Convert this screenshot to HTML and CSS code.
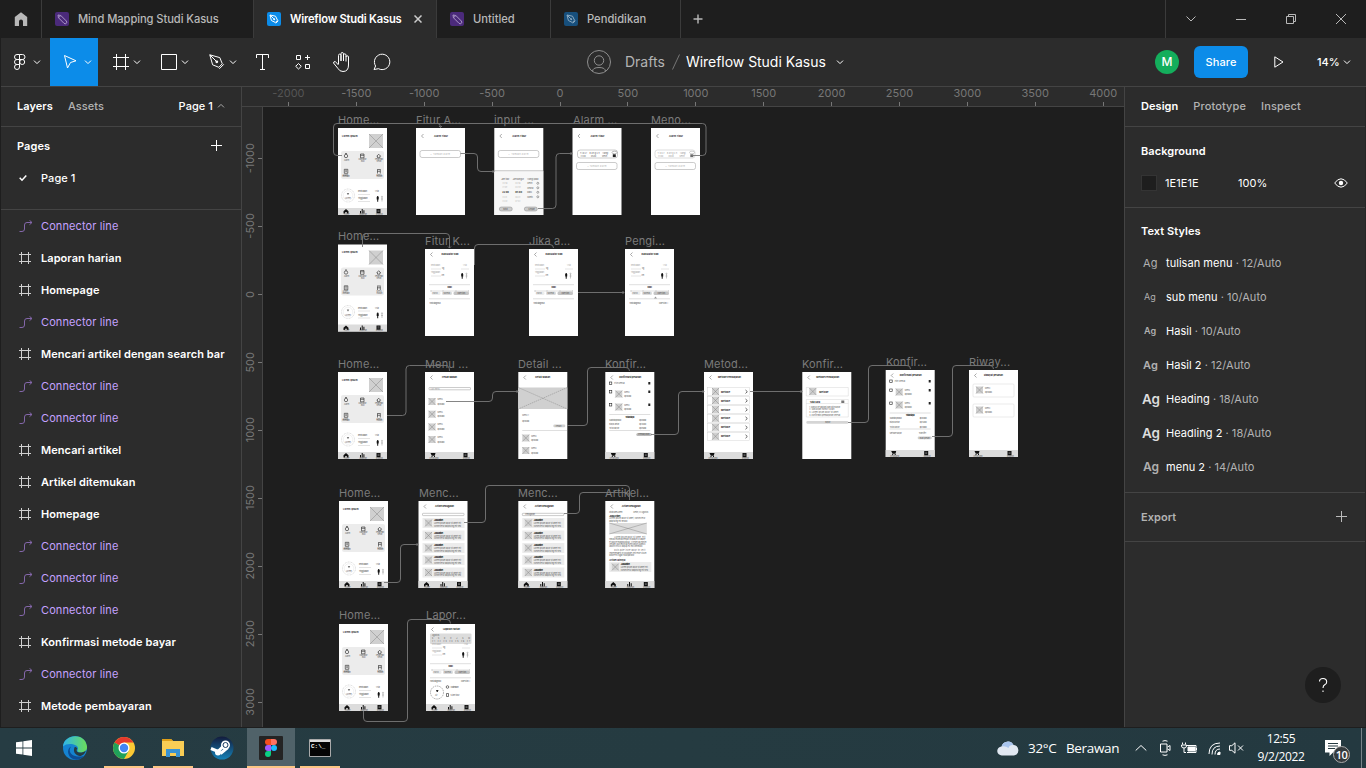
FILE: index.html
```html
<!DOCTYPE html>
<html lang="en">
<head>
<meta charset="utf-8">
<title>Wireflow Studi Kasus</title>
<link rel="stylesheet" href="styles.css">
</head>
<body>
<svg class="defs" width="0" height="0" aria-hidden="true">
  <defs>
    <symbol id="chev" viewBox="0 0 8 8"><path d="M1 2.6 4 5.6 7 2.6" fill="none" stroke="currentColor"/></symbol>
    <symbol id="frame" viewBox="0 0 12 12"><path d="M2.5 0v12M9.5 0v12M0 2.5h12M0 9.5h12" fill="none" stroke="currentColor"/></symbol>
    <symbol id="conn" viewBox="0 0 14 12"><path d="M.5 11.500h2.500q2.500 0 2.500-2.500v-4q0-2.500 2.500-2.500H13M10.500.3 13 2.500 10.500 4.700" fill="none" stroke="currentColor"/></symbol>
    <symbol id="pencil" viewBox="0 0 14 14"><path d="M3 3 5.800 3.500 11.300 9a1.600 1.600 0 0 1-2.300 2.300L3.500 5.800zM3.500 5.800 5.800 3.500" fill="none" stroke="currentColor" stroke-linejoin="round"/></symbol>
    <symbol id="nib" viewBox="0 0 14 14"><path d="M3 3 8.500 4.200 10.500 8.200 8.400 10.500 4.400 8.500zM3 3 6.800 6.800M11.300 8.700 8.800 11.300" fill="none" stroke="currentColor"/><circle cx="7.200" cy="7.200" r="1" fill="currentColor"/></symbol>
    <symbol id="pen" viewBox="0 0 16 16"><path d="M.8.8 10.800 3.600 13.300 9.800 9.800 13.300 3.600 10.800zM.8.8 7 7M14.800 10.300 10.300 14.800" fill="none" stroke="currentColor"/><circle cx="7.800" cy="7.800" r="1.400" fill="currentColor"/></symbol>

    <g id="back"><path d="M7.500 3.500 5.500 5.500 7.500 7.500" fill="none" stroke="#555" stroke-width=".5"/></g>
    <g id="ximg"><path class="g3" d="M0 0h7v7H0z"/><path class="thin" d="M0 0 7 7M7 0 0 7"/></g>
    <g id="people"><path d="M38.700 24h2v2.500h-.5v2.300h-1v-2.300h-.5z" fill="#111"/><circle cx="39.700" cy="23.700" r=".8" fill="#111"/><path class="thin" d="M44 24.500v4M43 26h2"/><circle class="thin" cx="44" cy="23.800" r=".6"/></g>
    <g id="navHome"><path fill="#111" d="m5.500 83.300 2.500-2.300 2.500 2.300V85.500h-1.500v-1.200h-2v1.200h-1.500z"/><text x="6" y="86.800">Home</text></g>
    <g id="navBook"><path fill="#111" d="M38.500 81h4v4.300h-4z"/><path d="M39.500 82.300h2M39.500 83.500h2" stroke="#bbb" stroke-width=".4"/><text x="38" y="86.800">Riwayat</text></g>
    <g id="nav3"><path class="g2" d="M0 80h49v7H0z"/><use href="#navHome"/><path fill="#111" d="M22 83h1v2.500h-1zM23.700 81h1v4.500h-1zM25.400 82.300h1v3.200h-1z"/><text x="21.500" y="86.800">Laporan</text><use href="#navBook"/></g>
    <g id="nav2"><path class="g2" d="M0 80h49v7H0z"/><path fill="#111" d="M5.500 81h5l-.7 2.700h-3zM6.500 84h1v1h-1zM9 84h1v1H9z"/><text x="4.500" y="86.600">Keranjang</text><use href="#navBook"/></g>

    <g id="home">
      <path class="w" d="M0 0h49v87H0z"/>
      <text class="b" x="4" y="8.700" textLength="15.500">Lorem Ipsum</text>
      <path class="g3" d="M31 6h14v14H31z"/><path class="thin" d="m31 6 14 14M45 6 31 20"/>
      <rect class="g1" x="3" y="23" width="43" height="28" rx="2"/>
      <g class="ico"><circle cx="8" cy="28" r="1.700"/><path d="M7 25.500h2"/><path d="M22.500 26h3.500v3.800h-3.500zM22.500 27.300H26M38.800 28.200l1.900-2 1.900 2h-.7v1.500h-2.400v-1.500zM6.300 41.300h3.500v4H6.300zM7.300 42.300h1.500M7.300 43.600h1.500M39 41.500h3.800M39.500 42v3.500M42.300 42v3.500M39.500 43.300h2.800"/></g>
      <text x="6" y="32.800">Alarm</text><text x="20.500" y="32.300" textLength="8">Kalkulator</text><text x="23" y="34.300">BMI</text><text x="37" y="32.300" textLength="8">Pesan mak</text><text x="38.500" y="34.300">sehat</text>
      <text x="4.500" y="47.500">Artikel</text><text x="4.500" y="49.400" textLength="7">kesehatan</text><text x="38.500" y="47.500">Menu</text><text x="38.500" y="49.400">makan</text>
      <circle cx="10" cy="67.500" r="6.500" fill="none" stroke="#bbb" stroke-width=".5" stroke-dasharray="1 .6"/><circle cx="10" cy="67.500" r="4.800" fill="none" stroke="#ddd" stroke-width=".4"/>
      <path d="M8.800 65h2.400l-.8 1.800h-.8z" fill="#777"/><text x="7" y="71">Lorem</text>
      <text x="20" y="64" textLength="9">Berat badan</text><path class="thin" stroke-opacity=".5" d="M20 66.500h12M20 73.500h12"/><text x="20" y="71" textLength="9.500">Tinggi badan</text><text x="37" y="64">Usia</text>
      <use href="#people" y="45"/>
      <use href="#nav3"/>
    </g>

    <g id="add"><rect class="field" x="4" y="22.500" width="40.500" height="7" rx="2"/><text x="14" y="27" textLength="20" fill="#aaa">＋ Tambah alarm</text></g>
    <g id="alarmHead"><path class="w" d="M0 0h49v87H0z"/><use href="#back" y="2.500"/><text class="b" x="18" y="9" textLength="14">Alarm Tidur</text></g>
    <g id="entry"><rect class="field" x="5" y="22" width="40" height="8" rx="2.500"/><text x="7.500" y="25.500" textLength="7">Tidur</text><text x="17" y="25.500" textLength="10">Bangun</text><text x="30" y="25.500">Ulangi</text><text x="8" y="28.600">22.00</text><text x="18.500" y="28.600">05.00</text><text x="29.500" y="28.600">Senin</text><ellipse cx="42" cy="24.500" rx="2.500" ry="1.300" fill="none" stroke="#777" stroke-width=".5"/><path fill="#222" d="M40.300 26.300h3v2.800h-3z"/></g>
    <g id="alarmSet"><path d="M0 43h49v44H0z" fill="#f7f7f7"/><path class="thin" d="M0 42.700h49"/><text x="7" y="51.500" textLength="8">Jam tidur</text><text x="18.500" y="51.500" textLength="11">Jam bangun</text><text x="33" y="51.500" textLength="11">Ulangi pada</text>
      <g fill="#bbb"><text x="8" y="56">20 58</text><text x="21" y="56">03 58</text><text x="8" y="60">21 59</text><text x="21" y="60">04 59</text><text x="8" y="69.500">23 01</text><text x="21" y="69.500">06 01</text><text x="8" y="73.500">24 02</text><text x="21" y="73.500">07 02</text></g>
      <text class="b" x="8" y="65">22 00</text><text class="b" x="21" y="65">05 00</text>
      <text x="33" y="56">Senin</text><text x="33" y="60.500">Selasa</text><text x="33" y="65">Rabu</text><text x="33" y="69.500">Kamis</text>
      <g class="ico" stroke-opacity=".6"><circle cx="43.500" cy="55.300" r="1"/><circle cx="43.500" cy="59.800" r="1"/><circle cx="43.500" cy="64.300" r="1"/><circle cx="43.500" cy="68.800" r="1"/></g>
      <rect x="5" y="79" width="13" height="4" rx="2" fill="#ccc" stroke="#777" stroke-width=".4"/><text x="9" y="82">Batal</text><rect x="30" y="79" width="13" height="4" rx="2" fill="#ccc" stroke="#777" stroke-width=".4"/><text x="34" y="82">Simpan</text></g>

    <g id="bmiBody">
      <text x="6" y="17" fill="#aaa" textLength="9">Berat badan</text><text x="17" y="20">kg</text><text x="38" y="17" fill="#aaa">Usia</text><path class="thin" stroke-opacity=".5" d="M6 20h10M6 27h10M36 20h8"/><text x="6" y="24" fill="#aaa" textLength="9">Tinggi badan</text><text x="16.500" y="27">cm</text>
      <g transform="translate(-2.500 1)"><use href="#people"/></g><path class="thin" stroke-opacity=".6" d="M4 35.700h41M4 49.800h41"/><text class="b" x="22.500" y="38.700">BMI</text>
      <path class="thin" stroke-opacity=".6" d="M5.500 42h38M6 41v2M18 41v2M31 41v2M43.500 41v2"/><rect x="6.500" y="42.500" width="9" height="3.500" rx="1.500" class="g1"/><rect x="17" y="42.500" width="10" height="3.500" rx="1.500" class="g2"/><rect x="28.500" y="42.500" width="15.500" height="3.500" rx="1.500" fill="#c5c5c5"/>
      <text x="7.500" y="45.300">Kurus</text><text x="18.500" y="45.300">Normal</text><text x="32.500" y="45.300">Obesitas</text>
    </g>
    <g id="bmi"><path class="w" d="M0 0h49v87H0z"/><use href="#back"/><text class="b" x="16.500" y="6.200" textLength="17">Kalkulator BMI</text><use href="#bmiBody"/><text x="4.500" y="55.200" textLength="11">Hasil diagnosa</text></g>

    <g id="product"><use href="#ximg"/><text x="9" y="2">Menu</text><text x="9" y="6.500" textLength="7">Rp 10.000</text></g>
    <g id="check"><rect class="ico" x="4" y="0" width="2.500" height="2.500"/><path fill="#222" d="M43 0h2v2.500h-2z"/></g>
    <g id="pay"><rect class="card" x="3.500" width="42" height="8"/><use href="#ximg" x="8" y=".5"/><text class="b" x="17" y="5" textLength="9">Metode</text><path d="m41.500 2.500 1.800 1.700-1.800 1.700" fill="none" stroke="#222" stroke-width=".7"/></g>
    <g id="article"><path class="g1" d="M4 0h42v10H4z"/><use href="#ximg" x="6.500" y="1.500"/><text class="b" x="15.500" y="3.200" textLength="9">Judul artikel</text><text x="15.500" y="6" textLength="27">Lorem ipsum dolor sit amet elit</text><text x="15.500" y="8.500" textLength="27">consectetur adipiscing elit sed</text></g>
    <g id="articles"><path class="w" d="M0 0h49v87H0z"/><use href="#back"/><text class="b" x="16.500" y="6.200" textLength="19">Artikel kebugaran</text><rect class="field" x="4" y="12.300" width="41.500" height="2.300" rx=".6"/><use href="#article" y="17"/><use href="#article" y="29.500"/><use href="#article" y="42"/><use href="#article" y="54"/><use href="#article" y="66.500"/><use href="#nav3"/></g>
  </defs>
</svg>

<div class="app">
  <header class="tabs">
    <div class="home-tab"><svg width="14" height="14" viewBox="0 0 14 14"><path fill="#b8b8b8" d="M7 .2 13.200 5v9H9V9.500a2 2 0 0 0-4 0V14H.8V5z"/></svg></div>
    <div class="tab t1"><svg class="fi purple" width="14" height="14"><use href="#pencil"/></svg><span>Mind Mapping Studi Kasus</span></div>
    <div class="tab t2 active"><svg class="fi blue" width="14" height="14"><use href="#nib"/></svg><span>Wireflow Studi Kasus</span><svg class="close" width="8" height="8"><path d="m.5.5 7 7m0-7-7 7" stroke="#ccc" stroke-width="1.500"/></svg></div>
    <div class="tab t3"><svg class="fi purple" width="14" height="14"><use href="#pencil"/></svg><span>Untitled</span></div>
    <div class="tab t4"><svg class="fi navy" width="14" height="14"><use href="#nib"/></svg><span>Pendidikan</span></div>
    <svg class="newtab" width="10" height="10"><path d="M5 .5v9M.5 5h9" stroke="#b8b8b8" stroke-width="1.400"/></svg>
    <div class="win">
      <span><svg width="12" height="12"><path d="m1.500 3.500 4.500 4.500 4.500-4.500"/></svg></span>
      <span><svg width="12" height="12"><path d="M1 6.500h10"/></svg></span>
      <span><svg width="12" height="12"><path d="M1.500 3.500h7v7h-7zM3.500 3.500v-2h7v7h-2"/></svg></span>
      <span><svg width="12" height="12"><path d="m1 1 10 10M11 1 1 11"/></svg></span>
    </div>
  </header>

  <div class="toolbar">
    <div class="tool menu"><svg width="12" height="16" viewBox="0 0 12 16"><path d="M5.500.5H3a2.400 2.400 0 0 0 0 5h2.500zM5.500.5h3a2.400 2.400 0 0 1 0 5h-3M5.500 5.500H3a2.400 2.400 0 0 0 0 5h2.500zM5.500 10.500H3a2.500 2.500 0 1 0 2.500 2.500z"/><circle cx="8.200" cy="8" r="2.500"/></svg><svg class="chev" width="8" height="8"><use href="#chev"/></svg></div>
    <div class="tool move"><svg width="14" height="16" viewBox="0 0 14 16"><path d="M1.500 1.500 13 6.800 7.500 8.500 4.500 14z"/></svg><svg class="chev" width="8" height="8"><use href="#chev"/></svg></div>
    <div class="tool drop"><svg width="16" height="16" viewBox="0 0 16 16"><path d="M3.500 0v16M12.500 0v16M0 3.500h16M0 12.500h16"/></svg><svg class="chev" width="8" height="8"><use href="#chev"/></svg></div>
    <div class="tool drop"><svg width="16" height="16"><path d="M.5.5h15v15H.5z"/></svg><svg class="chev" width="8" height="8"><use href="#chev"/></svg></div>
    <div class="tool drop"><svg width="16" height="16"><use href="#pen"/></svg><svg class="chev" width="8" height="8"><use href="#chev"/></svg></div>
    <div class="tool one"><svg width="14" height="16"><path d="M1.500 4V.5h12V4M7.500.5v15M5 15.500h5"/></svg></div>
    <div class="tool one"><svg width="16" height="16"><path d="M2.500 1.500h4v4h-4zM13.500 1v5M11 3.500h5M11.500 10.500h4v4h-4zM4.500 9.500 7.300 12.300 4.500 15 1.700 12.300z"/></svg></div>
    <div class="tool one"><svg width="20" height="20" viewBox="0 0 20 20"><path d="M6.500 12V3.500q0-1.400 1.200-1.400T9 3.500V9M9 9V1.800Q9 .5 10.200.5t1.300 1.300V9m0-6q0-1.200 1.200-1.200T14 3v6.500m0-4.500q0-1.200 1.200-1.200T16.500 5v8q0 6.500-5.500 6.500-3.500 0-5-3L1.500 11q0-1.500 1.800-1.500L6.500 13"/></svg></div>
    <div class="tool one"><svg width="18" height="18"><path d="M1 16.500 2.600 13A7.700 7.700 0 1 1 5.500 15.700z"/></svg></div>
    <div class="crumb">
      <svg width="24" height="24"><g fill="none" stroke="#8f8f8f"><circle cx="12" cy="12" r="11.500"/><circle cx="12" cy="10.500" r="4.700"/><path d="M5.500 21.500q0-4 6.500-4t6.500 4"/></g></svg>
      <span class="drafts">Drafts</span><svg class="slash" width="8" height="16"><path d="M7.500.5.500 15.500" stroke="#777"/></svg><span class="fname">Wireflow Studi Kasus</span><svg class="chev" width="8" height="8"><use href="#chev"/></svg>
    </div>
    <div class="actions">
      <div class="avatar">M</div><div class="share">Share</div>
      <svg class="play" width="10" height="12"><path d="M.8.8 9 6 .8 11.200z" fill="none" stroke="#fff"/></svg>
      <span class="zoom">14%</span><svg class="chev" width="8" height="8"><use href="#chev"/></svg>
    </div>
  </div>

  <div class="main">
    <aside class="left">
      <div class="ltabs"><b>Layers</b><span class="dim">Assets</span><span class="pg">Page 1</span><svg class="up" width="8" height="8"><use href="#chev"/></svg></div>
      <div class="pages">
        <div class="ptitle"><b>Pages</b><svg width="12" height="12"><path d="M6.500 0v11M1 5.500h11" stroke="#fff"/></svg></div>
        <div class="prow"><svg width="8" height="8"><path d="m.7 3.800 2.300 2.400L7.300 1.500" fill="none" stroke="#fff" stroke-width="1.500"/></svg><span>Page 1</span></div>
      </div>
      <ul class="layers">
        <li class="c"><svg><use href="#conn"/></svg>Connector line</li>
        <li><svg><use href="#frame"/></svg>Laporan harian</li>
        <li><svg><use href="#frame"/></svg>Homepage</li>
        <li class="c"><svg><use href="#conn"/></svg>Connector line</li>
        <li><svg><use href="#frame"/></svg>Mencari artikel dengan search bar</li>
        <li class="c"><svg><use href="#conn"/></svg>Connector line</li>
        <li class="c"><svg><use href="#conn"/></svg>Connector line</li>
        <li><svg><use href="#frame"/></svg>Mencari artikel</li>
        <li><svg><use href="#frame"/></svg>Artikel ditemukan</li>
        <li><svg><use href="#frame"/></svg>Homepage</li>
        <li class="c"><svg><use href="#conn"/></svg>Connector line</li>
        <li class="c"><svg><use href="#conn"/></svg>Connector line</li>
        <li class="c"><svg><use href="#conn"/></svg>Connector line</li>
        <li><svg><use href="#frame"/></svg>Konfirmasi metode bayar</li>
        <li class="c"><svg><use href="#conn"/></svg>Connector line</li>
        <li><svg><use href="#frame"/></svg>Metode pembayaran</li>
      </ul>
    </aside>

    <section class="stage">
      <div class="hruler"><span class="faint">-2000</span><span>-1500</span><span>-1000</span><span>-500</span><span>0</span><span>500</span><span>1000</span><span>1500</span><span>2000</span><span>2500</span><span>3000</span><span>3500</span><span>4000</span></div>
      <div class="vruler"><span><i>-1000</i></span><span><i>-500</i></span><span><i>0</i></span><span><i>500</i></span><span><i>1000</i></span><span><i>1500</i></span><span><i>2000</i></span><span><i>2500</i></span><span><i>3000</i></span></div>
      <svg class="canvas" width="861" height="620" viewBox="263 107 861 620">
        <g class="labels">
          <text x="338" y="124">Home...</text><text x="416" y="124">Fitur A...</text><text x="494" y="124">input ...</text><text x="573" y="124">Alarm ...</text><text x="651" y="124">Meno...</text>
          <text x="338" y="240">Home...</text><text x="425" y="245">Fitur K...</text><text x="529" y="245">Jika a...</text><text x="625" y="245">Pengi...</text>
          <text x="338" y="368">Home...</text><text x="425" y="368">Menu ...</text><text x="518" y="368">Detail ...</text><text x="605" y="368">Konfir...</text><text x="704" y="368">Metod...</text><text x="802" y="368">Konfir...</text><text x="886" y="366">Konfir...</text><text x="969" y="366">Riway...</text>
          <text x="339" y="497">Home...</text><text x="419" y="497">Menc...</text><text x="518" y="497">Menc...</text><text x="605" y="497">Artikel...</text>
          <text x="339" y="619">Home...</text><text x="426" y="619">Lapor...</text>
        </g>
        <g class="art">
          <use href="#home" x="338" y="128"/>
          <g transform="translate(416 128)"><use href="#alarmHead"/><use href="#add"/></g>
          <g transform="translate(494.300 128)"><use href="#alarmHead"/><use href="#add"/><use href="#alarmSet"/></g>
          <g transform="translate(572.500 128)"><use href="#alarmHead"/><use href="#entry"/><use href="#add" y="12"/></g>
          <g transform="translate(651 128)"><use href="#alarmHead"/><g opacity=".65"><use href="#entry" x="-1"/></g><use href="#add" y="12"/></g>

          <use href="#home" x="338" y="244.500"/>
          <use href="#bmi" x="425" y="249"/>
          <use href="#bmi" x="529" y="249"/>
          <g transform="translate(625 249)"><use href="#bmi"/><text x="34" y="55.200">Obesitas I</text><path d="m29 49.500 1.500-2 1.500 2z" fill="#999"/></g>

          <use href="#home" x="338" y="372"/>
          <g transform="translate(425 372)"><path class="w" d="M0 0h49v87H0z"/><use href="#back"/><text class="b" x="17" y="6.200" textLength="15">Pesan Makan</text><rect class="field" x="4" y="15.500" width="41.500" height="2.300" rx=".6"/><text x="5.500" y="17.500" fill="#999">Cari menu</text><use href="#product" x="3.500" y="26"/><use href="#product" x="3.500" y="38.700"/><use href="#product" x="3.500" y="51.400"/><use href="#product" x="3.500" y="64"/><use href="#nav2"/></g>
          <g transform="translate(518.300 372)"><path class="w" d="M0 0h49v87H0z"/><use href="#back"/><text class="b" x="17" y="6.200" textLength="15">Detail Makan</text><path class="g3" d="M0 15.500h49v21.500H0z"/><path class="thin" stroke-dasharray="1.500 .7" d="m0 15.500 49 21.500M49 15.500 0 37"/><text x="4" y="44">Menu 1</text><text x="4" y="50" textLength="7">Rp 10.000</text><rect x="35" y="52.500" width="12" height="2.700" rx="1.300" class="g3"/><text x="37.500" y="54.700">Pesan</text><path class="thin" stroke-opacity=".6" d="M4 58.500h45"/><use href="#product" x="4" y="62.500"/><use href="#product" x="4" y="75"/></g>
          <g transform="translate(605.300 372)"><path class="w" d="M0 0h49v87H0z"/><use href="#back"/><text class="b" x="14" y="6.200" textLength="22">Konfirmasi pesanan</text><use href="#check" y="10"/><text x="9" y="12">Pilih Semua</text><use href="#check" y="18.500"/><use href="#product" x="10" y="18.500"/><use href="#check" y="31.500"/><use href="#product" x="10" y="31.500"/><path class="thin" stroke-opacity=".6" d="M4 42.500h41M4 58.500h41"/><text class="b" x="20" y="45.500" textLength="9">Total Biaya</text><text x="4" y="49" textLength="12">Subtotal produk</text><text x="34" y="49" textLength="7">Rp 20.000</text><text x="4" y="53.300">Biaya antar</text><text x="34" y="53.300" textLength="7">Rp 5.000</text><text x="4" y="57.300">Total bayar</text><text x="34" y="57.300" textLength="7">Rp 25.000</text><rect x="31" y="61" width="15.500" height="3" rx="1.500" fill="#bbb"/><text x="33" y="63.300" textLength="11">Pembayaran</text><use href="#nav2"/></g>
          <g transform="translate(704 372)"><path class="w" d="M0 0h49v87H0z"/><use href="#back"/><text class="b" x="14" y="6.400" textLength="23">Metode Pembayaran</text><use href="#pay" y="15.500"/><use href="#pay" y="24.500"/><use href="#pay" y="33.500"/><use href="#pay" y="42.300"/><use href="#pay" y="51.300"/><use href="#pay" y="60.300"/><use href="#nav2"/></g>
          <g transform="translate(802.300 372)"><path class="w" d="M0 0h49v87H0z"/><use href="#back"/><text class="b" x="14" y="6.400" textLength="23">Metode Pembayaran</text><path class="card" d="M4 15.500h42V24H4zM4 27.500h42v17.500H4zM4 31.500h42"/><use href="#ximg" x="7" y="16"/><text class="b" x="17" y="21" textLength="9">Metode</text><text class="b" x="7.500" y="30.500">Tata cara</text><path d="M39 28.500h3v2.500h-3z" fill="#777"/><text x="7" y="35.500" textLength="31">1. Masuk ke aplikasi dan pilih bayar</text><text x="7" y="38" textLength="25">2. Masukkan nomor tujuan</text><text x="7" y="41" textLength="29">3. Lorem ipsum dolor sit amet</text><text x="7" y="43.500" textLength="31">4. Konfirmasi pembayaran selesai</text><rect x="4" y="49" width="42" height="2.700" rx="1.300" fill="#d5d5d5"/><text x="23" y="51.200">Bayar</text></g>
          <g transform="translate(885.700 370)"><path class="w" d="M0 0h49v87H0z"/><use href="#back"/><text class="b" x="14" y="6.200" textLength="22">Konfirmasi pesanan</text><use href="#check" y="10"/><text x="9" y="12">Pilih Semua</text><use href="#check" y="19"/><use href="#product" x="10" y="18.500"/><use href="#check" y="32"/><use href="#product" x="10" y="31.500"/><path class="thin" stroke-opacity=".6" d="M4 43h41M4 59h41"/><text class="b" x="20" y="45.500" textLength="9">Total Biaya</text><text x="4" y="49" textLength="12">Subtotal produk</text><text x="34" y="49" textLength="7">Rp 20.000</text><text x="4" y="53.300">Biaya antar</text><text x="34" y="53.300" textLength="7">Rp 5.000</text><text x="4" y="57.500">Total bayar</text><text x="34" y="57.500" textLength="7">Rp 25.000</text><text x="4" y="63.500" textLength="12">Metode bayar</text><text x="33" y="63.500">Transfer</text><rect x="32" y="66.500" width="14" height="2.700" rx="1.300" class="g3"/><text x="34" y="68.600" textLength="10">Buat pesan</text><use href="#nav2"/></g>
          <g transform="translate(969 370)"><path class="w" d="M0 0h49v87H0z"/><use href="#back"/><text class="b" x="15" y="6.200" textLength="19">Riwayat pesanan</text><rect class="card" x="4" y="14" width="41" height="13" rx="1"/><use href="#product" x="7" y="16.500"/><rect class="card" x="4" y="34" width="41" height="13" rx="1"/><use href="#product" x="7" y="36.500"/><use href="#nav2"/></g>

          <use href="#home" x="339" y="501"/>
          <use href="#articles" x="418.500" y="501"/>
          <g transform="translate(518.300 501)"><use href="#articles"/><text x="7" y="14.300">Kebugaran</text></g>
          <g transform="translate(605.300 501)"><path class="w" d="M0 0h49v87H0z"/><use href="#back"/><text class="b" x="16.500" y="6.200" textLength="19">Artikel kebugaran</text><text x="4" y="12" textLength="13">Ditulis oleh Lorem</text><text x="28" y="12" textLength="15">Senin, 22 Agustus</text><text class="b" x="4" y="15.500" textLength="11">Judul Artikel</text><text x="4" y="18.200" textLength="36">Lorem ipsum dolor sit amet, consectetur</text><text x="4" y="20.600" textLength="18">adipiscing elit sed do</text><path class="g2" d="M4 22h37.500v11H4z"/><path class="thin" d="m4 22 37.500 11M41.500 22 4 33"/>
            <text x="9" y="36.700" textLength="31">Lorem ipsum dolor sit amet, elit</text><text x="4" y="39.100" textLength="36">sed do eiusmod tempor incididunt ut labore</text><text x="4" y="41.500" textLength="37">et dolore magna aliqua. Ut enim ad minim</text><text x="4" y="43.900" textLength="36">veniam, quis nostrud exercitation ullamco</text><text x="4" y="46.300" textLength="33">laboris nisi ut aliquip ex ea commodo</text><text x="9" y="50" textLength="31">Duis aute irure dolor in velit</text><text x="4" y="52.500" textLength="37">reprehenderit in voluptate velit esse cillum</text><text x="4" y="55" textLength="25">dolore eu fugiat nulla pariatur</text><text class="b" x="4" y="59.500" textLength="16">Artikel lainnya</text><use href="#article" y="61"/><use href="#nav3"/></g>

          <use href="#home" x="339" y="624"/>
          <g transform="translate(426 624)"><path class="w" d="M0 0h49v87H0z"/><use href="#back"/><text class="b" x="17" y="6.200" textLength="17">Laporan Harian</text><rect class="g2" x="4" y="9.500" width="41.500" height="10.500" rx="1"/><text x="6" y="12">Agustus</text><text x="6" y="15" textLength="38">S&#160;&#160;S&#160;&#160;R&#160;&#160;K&#160;&#160;J&#160;&#160;S&#160;&#160;M</text><text x="6" y="18.200" textLength="38">21 22 23 24 25 26 27</text><use href="#bmiBody" y="4"/><text x="4" y="57.500" textLength="11">Hasil diagnosa</text><text x="35" y="57.500">Obesitas I</text><circle cx="11" cy="68.500" r="6.500" fill="none" stroke="#777" stroke-width=".6" stroke-dasharray="1.500 .8"/><path d="M10 66h2.500l-.8 2h-.9z" fill="#222"/><text x="9" y="71.500">Air</text><circle class="ico" cx="21.500" cy="63" r="1.300"/><path class="ico" d="M20.500 69.500h2v3h-2z"/><text x="24.500" y="64" textLength="8">3 kali makan</text><text x="24.500" y="72" textLength="9">5 jam tidur</text><use href="#nav3"/></g>
        </g>
        <g class="wires">
          <path d="M342 155.500h-5q-3.500 0-3.500-3.500v-25q0-3.500 3.500-3.500H702.500q3.500 0 3.500 3.500v25q0 3.500-3.500 3.500H692M438 123.500q2.500 0 2.500 4M439 126l1.500 1.500 1.500-1.500"/>
          <path d="M460.500 153.500H474q3.500 0 3.500 3.500v11q0 3.500 3.500 3.500h13m-1.500-1.500 1.500 1.500-1.500 1.500"/>
          <path d="M538 208.500h14.500q3.500 0 3.500-3.500v-48q0-3.500 3.500-3.500H572m-1.500-1.500 1.500 1.500-1.500 1.500"/>
          <path d="M362.500 247v-10q0-3.500 3.500-3.500h80q3.500 0 3.500 3.500v11m-1.500-1.500 1.500 1.500 1.500-1.500M474.500 265v-17q0-3.500 3.500-3.500h72q3.500 0 3.500 3.500M578 292.500h46m-1.500-1.500 1.500 1.500-1.500 1.500"/>
          <path d="M387 415.500h15.500q3.500 0 3.500-3.500v-43q0-3.500 3.500-3.500H446q3.500 0 3.500 5.500M446 401.500h43q3.500 0 3.500-3.500v-3q0-3.500 3.500-3.500h22m-1.500-1.500 1.500 1.500-1.500 1.500"/>
          <path d="M567 425.500h17q3.500 0 3.500-3.500v-51q0-3.500 3.500-3.500h35q3.500 0 3.500 3.500M651 434.500h24q3.500 0 3.500-3.500v-36q0-3.500 3.500-3.500h22m-1.500-1.500 1.500 1.500-1.500 1.500M750 391.500h52m-1.500-1.500 1.500 1.500-1.500 1.500"/>
          <path d="M848 422.500h17q3.500 0 3.500-3.500v-50q0-3.500 3.500-3.500h35q3.500 0 3.500 3.500M932 436.500h17q3.500 0 3.500-3.500v-64q0-3.500 3.500-3.500h34q3.500 0 3.500 3.500"/>
          <path d="M384 582.500h13q3.500 0 3.500-3.500v-31q0-3.500 3.500-3.500h14m-1.500-1.500 1.500 1.500-1.500 1.500M464 522.500h18q3.500 0 3.500-3.500v-30q0-3.500 3.500-3.500h137q3.500 0 3.500 3.500v11M564 513.500h12q3.500 0 3.500-3.500v-14q0-3.500 3.500-3.500h43q3.500 0 3.500 3.500"/>
          <path d="M363.500 711v7q0 3.500 3.500 3.500h37q3.500 0 3.500-3.500V623q0-3.500 3.500-3.500h36q3.500 0 3.500 4"/>
        </g>
      </svg>
    </section>

    <aside class="right">
      <div class="rtabs"><b>Design</b><span>Prototype</span><span>Inspect</span></div>
      <div class="bg"><b>Background</b>
        <div class="bgrow"><i></i><span class="hex">1E1E1E</span><span class="pct">100%</span><svg width="14" height="10"><path d="M.7 5Q3.500.8 7 .8T13.300 5Q10.500 9.200 7 9.200T.7 5z" fill="none" stroke="#fff"/><circle cx="7" cy="5" r="2.200" fill="#fff"/></svg></div>
      </div>
      <div class="styles"><b>Text Styles</b>
        <ul>
          <li><em>Ag</em>tulisan menu<small>&#160;· 12/Auto</small></li>
          <li><em class="s">Ag</em>sub menu<small>&#160;· 10/Auto</small></li>
          <li><em class="s bd">Ag</em>Hasil<small>&#160;· 10/Auto</small></li>
          <li><em class="bd">Ag</em>Hasil 2<small>&#160;· 12/Auto</small></li>
          <li><em class="l bd">Ag</em>Heading<small>&#160;· 18/Auto</small></li>
          <li><em class="l bd">Ag</em>Headling 2<small>&#160;· 18/Auto</small></li>
          <li><em class="m bd">Ag</em>menu 2<small>&#160;· 14/Auto</small></li>
        </ul>
      </div>
      <div class="export"><b>Export</b><svg width="12" height="12"><path d="M6.500 0v11M1 5.500h11" stroke="#bbb"/></svg></div>
      <div class="help"><svg width="12" height="16"><path d="M2.500 4.500Q2.500 1.500 6 1.500t3.700 3.200Q9.700 6.600 8 7.600q-2 1-2 3.400M6 13.500V15" fill="none" stroke="#fff" stroke-width="1.100"/></svg></div>
    </aside>
  </div>
</div>

<footer class="taskbar">
  <div class="ti"><svg width="16" height="16"><path fill="#fff" d="M0 2.300 6.500 1.400V7.600H0zM7.300 1.300 16 0v7.600H7.300zM0 8.400h6.500v6.200L0 13.700zM7.300 8.400H16V16l-8.700-1.200z"/></svg></div>
  <div class="ti"><svg width="24" height="24"><defs><linearGradient id="eg" x1="0" x2="1"><stop offset="0" stop-color="#2fb5ea"/><stop offset="1" stop-color="#6bdc58"/></linearGradient></defs><circle cx="12" cy="12" r="12" fill="#1583d0"/><path d="M0 10.500C1-2 22-4 24 10.500c.5 4-3 6.500-7 6-3-.5-3-2-2-3.500 1-5-11-7-15-2.500z" fill="url(#eg)"/><path d="M8 10.500c-4 6 2 12 13 9.500-5 6-15 4.500-16-4q0-4 3-5.500z" fill="#0d4d94"/><path d="M14.200 12.500c-1.500 2.500 0 4 3 4 2 0 4-.5 5.500-2-.5 3-3 5.500-6 5.500-5-1-7-5-5-9q2-.5 2.500 1.500z" fill="#263b42"/></svg></div>
  <div class="ti open"><svg width="24" height="24"><circle cx="12" cy="12" r="11" fill="#fcc934"/><path d="M12 12 2.500 6.500A11 11 0 0 1 21.500 6.500H12z" fill="#e5392d"/><path d="M2.500 6.500A11 11 0 0 0 12 23l4.700-8.300L12 12z" fill="#20a15a"/><circle cx="12" cy="12" r="5.500" fill="#fff"/><circle cx="12" cy="12" r="4.200" fill="#4385f4"/></svg></div>
  <div class="ti open"><svg width="22" height="20"><path d="M0 1h9l2 2h11v15H0z" fill="#f9cd55"/><path d="M0 1h9l2 2H0z" fill="#df9f18"/><path d="M4 19v-8h14v8h-4v-4H8v4z" fill="#3993d4"/></svg></div>
  <div class="ti"><svg width="24" height="24"><defs><linearGradient id="sg" x2="0" y2="1"><stop stop-color="#131b3c"/><stop offset="1" stop-color="#1582b8"/></linearGradient></defs><circle cx="12" cy="12" r="11.500" fill="url(#sg)"/><path d="m1 12.500 7 3 5-5 3 2.500-5.500 4.500" fill="none" stroke="#fff" stroke-width="3"/><circle cx="8" cy="16.500" r="3" fill="#fff"/><circle cx="15.500" cy="9" r="4.500" fill="#fff"/><circle cx="15.500" cy="9" r="2.500" fill="none" stroke="#173a60"/></svg></div>
  <div class="ti open sel"><svg width="24" height="24"><rect width="24" height="24" rx="1" fill="#242424"/><path d="M12 3H9a3 3 0 0 0 0 6h3z" fill="#f24e1e"/><path d="M12 3h3a3 3 0 0 1 0 6h-3z" fill="#ff7262"/><path d="M12 9H9a3 3 0 0 0 0 6h3z" fill="#a259ff"/><circle cx="15" cy="12" r="3" fill="#1abcfe"/><path d="M12 15H9a3 3 0 1 0 3 3z" fill="#0acf83"/></svg></div>
  <div class="ti open last"><svg width="22" height="18"><path d="M.5.5h21v17H.5z" fill="#050505" stroke="#aaa"/><path d="M1 1h20v2H1z" fill="#ddd"/><text x="2" y="9">C:\_</text></svg></div>
  <div class="tray">
    <svg class="cloud" width="22" height="16"><path d="M5 15.500a4.500 4.500 0 0 1-.5-9A6.500 6.500 0 0 1 16.500 5a5.300 5.300 0 0 1 .5 10.500z"/><path d="M4.500 6.500a6.500 6.500 0 0 1 12-1.500q-4-.5-5 3-3-2.500-7-1.500z"/></svg>
    <span class="deg">32°C</span><span class="wx">Berawan</span>
    <svg class="s1" width="12" height="8"><path d="m.7 6.500 5.300-5 5.300 5"/></svg>
    <svg class="s2" width="12" height="16"><path d="M3.500 1.200Q6 0 8.500 1.200M3.500 14.800Q6 16 8.500 14.800M1.500 4h6.500v8H1.500zM8.500 7l2.500-1.500v5L8.500 9"/></svg>
    <svg class="s3" width="17" height="12"><path d="M5 3.500h10v7H6M15.500 6v2M1.500.5v2M4.500.5v2M.5 3h5v1q0 2-2.500 2t-2.500-2zM3 6v4.500h2"/><path d="M7 5h7v4H7z" fill="#fff"/></svg>
    <svg class="s4" width="13" height="13"><path d="M1 12Q1 1 12 1M4 12.500Q4 4 12 4M7 12.500Q7 7 12 7"/><path d="M9.500 12.500q0-2.500 2.500-2.500v2.500z"/></svg>
    <svg class="s5" width="15" height="12"><path d="M.5 3.700h2.300L6 .8v10.400L2.800 8.300H.5zM9 3.500l5 5M14 3.500l-5 5"/></svg>
    <div class="clock"><span>12:55</span><span>9/2/2022</span></div>
    <div class="note"><svg width="17" height="16"><path d="M0 0h16v12.500H8L4.500 16v-3.500H0z" fill="#fff"/><path d="M3 3.500h10M3 6h10M3 8.500h7" stroke="#263b42"/></svg><span>10</span></div>
    <i class="peek"></i>
  </div>
</footer>
</body>
</html>
```
FILE: styles.css
```css
* { box-sizing: border-box; }
body { margin: 0; width: 1366px; height: 768px; overflow: hidden; background: #1e1e1e; color: #fff; font: 500 11px/16px Inter, sans-serif; }
svg { display: block; flex: none; }
ul { list-style: none; margin: 0; padding: 0; }
b { font-weight: 600; }
.defs { position: absolute; }
.app { height: 728px; padding: 0 0 1px 1px; display: flex; flex-direction: column; }

/* Tab bar */
.tabs { display: flex; height: 38px; align-items: stretch; font-size: 11.200px; color: #b8b8b8; }
.home-tab { width: 41px; border-right: 1px solid #3b3b3b; display: flex; align-items: center; justify-content: center; }
.tab { display: flex; align-items: center; padding-left: 13px; border-right: 1px solid #3b3b3b; white-space: nowrap; }
.tab span { margin-left: 9px; }
.t1 { width: 212px; }
.t2 { width: 183px; }
.t2 .close { margin-left: auto; margin-right: 14px; }
.t3 { width: 114px; }
.t4 { width: 130px; }
.active { background: #2c2c2c; color: #fff; }
.t1 span { letter-spacing: -.09px; }
.t2 span { letter-spacing: -.2px; font-weight: 600; }
.fi { border-radius: 2px; }
.purple { background: #4b2a7b; color: #aa96c6; }
.blue { background: #0c8ce9; color: #fff; }
.navy { background: #174f7c; color: #8ca9c0; }
.newtab { align-self: center; margin-left: 12px; }
.win { margin-left: auto; display: flex; border-left: 1px solid #3b3b3b; }
.win span { width: 50px; display: flex; align-items: center; justify-content: center; }
.win path { fill: none; stroke: #b9b9b9; }

/* Toolbar */
.toolbar { height: 49px; background: #2c2c2c; border-bottom: 1px solid #444; display: flex; align-items: center; }
.tool { height: 48px; display: flex; align-items: center; justify-content: center; flex: none; }
.tool > svg > path, .tool > svg > circle { fill: none; stroke: #fff; }
.tool .chev { margin-left: 7px; }
.menu { width: 49px; padding-left: 3px; }
.move { width: 48px; background: #0c8ce9; padding-left: 7px; }
.drop { width: 48px; padding-left: 9px; }
.drop .chev { margin-left: 4px; }
.one { width: 40px; }
.crumb { display: flex; align-items: center; margin-left: 185px; font-size: 14px; font-weight: 400; white-space: nowrap; }
.drafts { color: #b3b3b3; margin-left: 14px; width: 41px; }
.slash { margin: 0 6px; }
.fname { width: 141px; letter-spacing: -.04px; }
.crumb .chev { margin-left: 9px; }
.actions { margin-left: auto; display: flex; align-items: center; padding-right: 15px; }
.avatar { width: 24px; height: 24px; border-radius: 50%; background: #14ae5c; text-align: center; line-height: 24px; font-size: 12px; }
.share { width: 54px; height: 32px; margin-left: 15px; border-radius: 6px; background: #0c8ce9; text-align: center; line-height: 32px; letter-spacing: .1px; }
.play { margin: 0 33px 0 26px; }
.zoom { width: 21px; margin-right: 5px; white-space: nowrap; }

/* Panels */
.main { display: flex; flex: 1; min-height: 0; }
.left, .right { background: #2c2c2c; letter-spacing: .06px; flex: none; }
.left { width: 241px; border-right: 1px solid #444; overflow: hidden; }
.ltabs { height: 40px; border-bottom: 1px solid #444; display: flex; align-items: center; padding: 0 16px 1px; }
.ltabs b { width: 51px; }
.dim { color: #b3b3b3; }
.pg { margin-left: auto; }
.up { transform: scaleY(-1); margin-left: 4px; color: #aaa; }
.pages { height: 83px; border-bottom: 1px solid #444; }
.ptitle { height: 38px; display: flex; align-items: center; justify-content: space-between; padding: 0 19px 0 16px; }
.prow { height: 26px; display: flex; align-items: center; padding-left: 18px; gap: 14px; }
.layers li { height: 32px; display: flex; align-items: center; font-weight: 600; white-space: nowrap; }
.layers svg { width: 12px; height: 12px; margin: 0 10px 0 18px; color: #d0d0d0; }
.layers .c { color: #c4a1ff; font-weight: 400; letter-spacing: .11px; }
.layers .c svg { width: 14px; color: #8467aa; margin-right: 8px; }

/* Canvas and rulers */
.stage { flex: 1; display: grid; grid-template: 20px 620px / 21px 861px; overflow: hidden; }
.hruler { grid-column: 1 / 3; background: #2c2c2c; border-bottom: 1px solid #444; display: flex; padding-left: 12.500px; color: #777; font-weight: 400; line-height: 13px; }
.hruler span { flex: none; width: 67.900px; text-align: center; background: linear-gradient(#777, #777) center bottom / 1px 4px no-repeat; }
.hruler .faint { color: #555; }
.vruler { background: #2c2c2c; border-right: 1px solid #444; color: #777; font-weight: 400; padding-top: 17px; }
.vruler span { height: 68px; display: flex; align-items: center; justify-content: center; padding-right: 4px; background: linear-gradient(#777, #777) right center / 4px 1px no-repeat; }
.vruler i { font-style: normal; writing-mode: vertical-rl; transform: rotate(180deg); }
.canvas { background: #1e1e1e; }
.labels { fill: #7b7b7b; font-size: 11px; font-weight: 400; letter-spacing: .16px; }
.art { font-size: 1.900px; font-weight: 400; fill: #555; letter-spacing: 0; }
.wires { fill: none; stroke: #777; stroke-width: .9; }
.b { font-weight: 700; font-size: 2.300px; fill: #222; }
.w { fill: #fff; }
.g1 { fill: #ececec; }
.g2 { fill: #dcdcdc; }
.g3 { fill: #d0d0d0; }
.thin { fill: none; stroke: #777; stroke-width: .4; }
.ico { fill: none; stroke: #222; stroke-width: .6; }
.field { fill: #fff; stroke: #999; stroke-width: .5; }
.card { fill: none; stroke: #ccc; stroke-width: .4; }

/* Design panel */
.right { width: 242px; border-left: 1px solid #444; border-right: 1px solid #262626; position: relative; }
.rtabs { height: 40px; border-bottom: 1px solid #444; display: flex; align-items: center; padding: 0 0 1px 16px; gap: 15px; color: #b3b3b3; }
.rtabs b { color: #fff; }
.rtabs span { letter-spacing: .13px; }
.bg { height: 81px; border-bottom: 1px solid #444; padding: 16px 16px 0; }
.bgrow { height: 16px; margin-top: 16px; display: flex; align-items: center; font-weight: 400; }
.bgrow i { width: 16px; height: 16px; background: #1e1e1e; border: 1px solid #343434; margin-right: 8px; }
.hex { width: 73px; }
.pct { width: 96px; }
.styles { height: 285px; border-bottom: 1px solid #444; padding: 15px 16px 0; }
.styles ul { padding-top: 7px; }
.styles li { height: 34px; display: flex; align-items: center; font-weight: 400; letter-spacing: .04px; }
.styles em { width: 25px; padding-left: 2px; font-style: normal; color: #b0b0b0; font-size: 11px; }
.styles .s { font-size: 9px; padding-left: 3px; }
.styles .m { font-size: 12px; }
.styles .l { font-size: 13.500px; padding-left: 1px; letter-spacing: -.2px; color: #ddd; }
.styles .bd { font-weight: 600; }
.styles small { font-size: 11px; color: #b3b3b3; }
.export { height: 49px; border-bottom: 1px solid #444; padding: 0 18px 0 16px; display: flex; align-items: center; justify-content: space-between; color: #b3b3b3; }
.help { position: absolute; right: 24px; bottom: 24px; width: 36px; height: 36px; border-radius: 50%; background: #1e1e1e; display: flex; align-items: center; justify-content: center; }

/* Taskbar */
.taskbar { height: 40px; display: flex; background: linear-gradient(90deg, #263c43, #253b41 50%, #243940); font: 400 14px/20px "Open Sans", "Noto Sans", sans-serif; }
.ti { width: 40px; height: 40px; margin: 0 4.500px; display: flex; align-items: center; justify-content: center; flex: none; }
.ti:first-child { margin-left: 4px; margin-right: 6px; }
.open { border-bottom: 2px solid #fcc684; padding-top: 2px; }
.sel { width: 48px; margin: 0 1px 0 .500px; background: #506269; }
.last { margin-left: 4px; }
.ti text { fill: #fff; font: 700 6px "Liberation Mono", monospace; }
.tray { margin-left: auto; display: flex; align-items: center; height: 40px; white-space: nowrap; }
.tray > svg > path { stroke: #fff; fill: none; }
.tray > .cloud > path { stroke: none; fill: #e1e8f2; }
.tray > .cloud > path + path { fill: #a9c5ee; }
.tray > .s3 > path + path, .tray > .s4 > path + path { fill: #fff; }
.deg { width: 30px; margin-left: 9px; letter-spacing: -.3px; font-size: 13.500px; }
.wx { width: 53px; margin-left: 8px; letter-spacing: -.35px; font-size: 13.500px; }
.s1 { margin-left: 16px; }
.s2 { margin-left: 12px; }
.s3 { margin-left: 10px; }
.s4 { margin-left: 10px; }
.s5 { margin-left: 8px; }
.clock { width: 60px; margin-left: 7px; text-align: center; display: flex; flex-direction: column; font-size: 12px; line-height: 18px; letter-spacing: -.4px; }
.note { position: relative; width: 37px; padding-left: 14px; }
.note span { position: absolute; left: 22px; top: 6px; width: 17px; height: 17px; border: 1px solid #aaa; border-radius: 50%; background: #353b3e; font: 600 11px/15px "Open Sans", sans-serif; text-align: center; letter-spacing: -.5px; }
.peek { width: 1px; height: 40px; background: #778489; margin: 0 4px 0 13px; }
```
